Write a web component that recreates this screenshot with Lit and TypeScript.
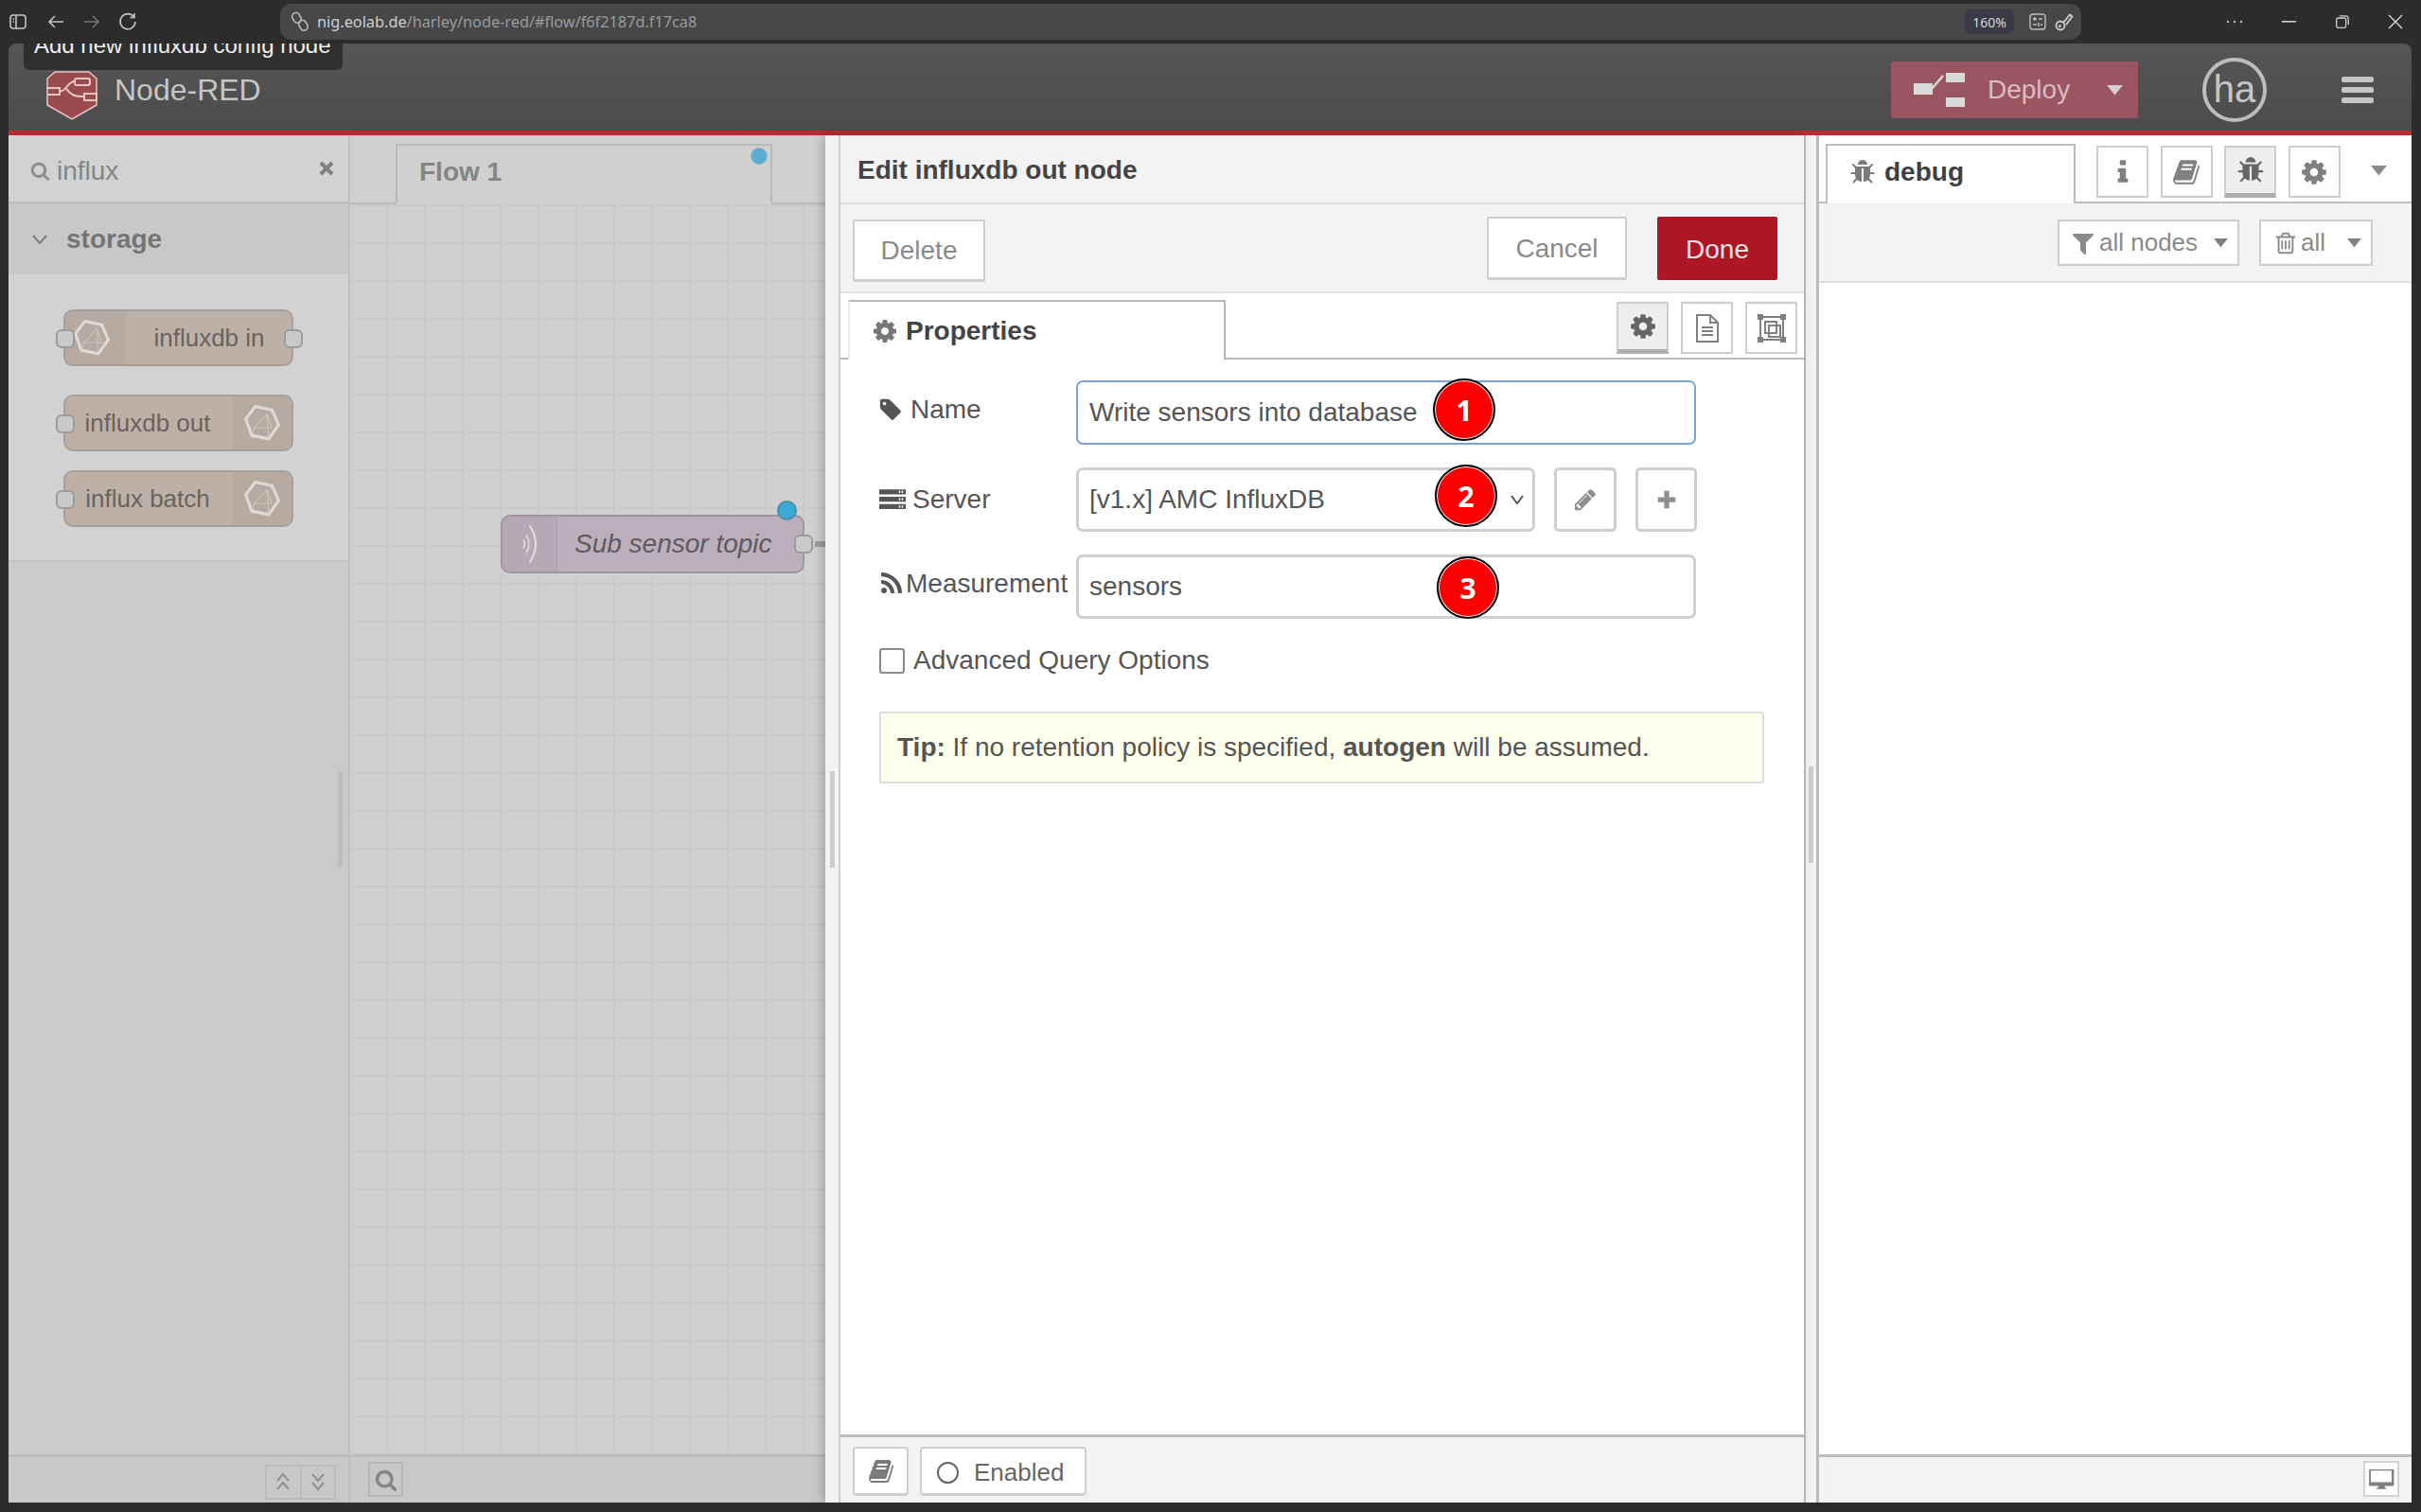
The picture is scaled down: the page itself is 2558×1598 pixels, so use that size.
import { LitElement, html, css } from 'lit';
import { customElement } from 'lit/decorators.js';

// font-awesome 4 style glyphs, all in a 1792 box
const GEAR = 'M1152 896q0-106-75-181t-181-75-181 75-75 181 75 181 181 75 181-75 75-181zm512-109v222q0 12-8 23t-20 13l-185 28q-19 54-39 91 35 50 107 138 10 12 10 25t-9 23q-27 37-99 108t-94 71q-12 0-26-9l-138-108q-44 23-91 38-16 136-29 186-7 28-36 28h-222q-14 0-24.5-8.5t-11.5-21.5l-28-184q-49-16-90-37l-141 107q-10 9-25 9-14 0-25-11-126-114-165-168-7-10-7-23 0-12 8-23 15-21 51-66.5t54-70.5q-27-50-41-99l-183-27q-13-2-21-12.5t-8-23.5v-222q0-12 8-23t19-13l186-28q14-46 39-92-40-57-107-138-10-12-10-24 0-10 9-23 26-36 98.5-107.5t94.5-71.5q13 0 26 10l138 107q44-23 91-38 16-136 29-186 7-28 36-28h222q14 0 24.5 8.5t11.5 21.5l28 184q49 16 90 37l142-107q9-9 24-9 13 0 25 10 129 119 165 170 7 8 7 22 0 12-8 23-15 21-51 66.5t-54 70.5q26 50 41 98l183 28q13 2 21 12.5t8 23.5z';
const BUG = 'M1696 960q0 26-19 45t-45 19h-224q0 171-67 290l208 209q19 19 19 45t-19 45q-18 19-45 19t-45-19l-198-197q-5 5-15 13t-42 28.5-65 36.5-82 29-97 13v-896h-128v896q-51 0-101.5-13.5t-87-33-66-39-43.5-32.5l-15-14-183 207q-20 21-48 21-24 0-43-16-19-18-20.5-44.5t15.5-46.5l202-227q-58-114-58-274h-224q-26 0-45-19t-19-45 19-45 45-19h224v-294l-173-173q-19-19-19-45t19-45 45-19 45 19l173 173h844l173-173q19-19 45-19t45 19 19 45-19 45l-173 173v294h224q26 0 45 19t19 45zm-480-576h-640q0-133 93.5-226.5t226.5-93.5 226.5 93.5 93.5 226.5z';
const TAG = 'M576 448q0-53-37.5-90.5t-90.5-37.5-90.5 37.5-37.5 90.5 37.5 90.5 90.5 37.5 90.5-37.5 37.5-90.5zm1067 576q0 53-37 90l-491 492q-39 37-91 37-53 0-90-37l-715-716q-38-37-64.5-101t-26.5-117v-416q0-52 38-90t90-38h416q53 0 117 26.5t102 64.5l715 714q37 39 37 91z';
const RSS = 'M576 1344q0 80-56 136t-136 56-136-56-56-136 56-136 136-56 136 56 56 136zm512 123q2 28-17 48-18 21-47 21h-135q-25 0-43-16.5t-20-41.5q-22-229-184.5-391.5t-391.5-184.5q-25-2-41.5-20t-16.5-43v-135q0-29 21-47 17-17 43-17h5q160 13 306 80.5t259 181.5q114 113 181.5 259t80.5 306zm512 2q2 27-18 47-18 20-46 20h-143q-26 0-44.5-17.5t-19.5-42.5q-12-215-101-408.5t-231.5-336-336-231.5-408.5-102q-25-1-42.5-19.5t-17.5-43.5v-143q0-28 20-46 18-18 44-18h3q262 13 501.5 120t425.5 294q187 186 294 425.5t120 501.5z';
const BOOK = 'M1703 478q40 57 18 129l-275 906q-19 64-76.5 107.5t-122.5 43.5h-923q-77 0-148.5-53.5t-99.5-131.5q-24-67-2-127 0-4 3-27t4-37q1-8-3-21.5t-3-19.5q2-11 8-21t16.5-23.5 16.5-23.5q23-38 45-91.5t30-91.5q3-10 .5-30t-.5-28q3-11 17-28t17-23q21-36 42-92t25-90q1-9-2.5-32t.5-28q4-13 22-30.5t22-22.5q19-26 42.5-84.5t27.5-96.5q1-8-3-25.5t-2-26.5q2-8 9-18t18-23 17-21q8-12 16.5-30.5t15-35 16-36 19.5-32 26.5-23.5 36-11.5 47.5 5.5l-1 3q38-9 51-9h761q74 0 114 56t18 130l-274 906q-36 119-71.5 153.5t-128.5 34.5h-869q-27 0-38 15-11 16-1 43 24 70 144 70h923q29 0 56-15.5t35-41.5l300-987q7-22 5-57 38 15 59 43zm-1064 2q-4 13 2 22.5t20 9.5h608q13 0 25.5-9.5t16.5-22.5l21-64q4-13-2-22.5t-20-9.5h-608q-13 0-25.5 9.5t-16.5 22.5zm-83 256q-4 13 2 22.5t20 9.5h608q13 0 25.5-9.5t16.5-22.5l21-64q4-13-2-22.5t-20-9.5h-608q-13 0-25.5 9.5t-16.5 22.5z';
const SEARCH = 'M1216 832q0-185-131.5-316.5t-316.5-131.5-316.5 131.5-131.5 316.5 131.5 316.5 316.5 131.5 316.5-131.5 131.5-316.5zm512 832q0 52-38 90t-90 38q-54 0-90-38l-343-342q-179 124-399 124-143 0-273.5-55.5t-225-150-150-225-55.5-273.5 55.5-273.5 150-225 225-150 273.5-55.5 273.5 55.5 225 150 150 225 55.5 273.5q0 220-124 399l343 343q37 37 37 90z';
const PENCIL = 'M491 1536l91-91-235-235-91 91v107h128v128h107zm523-928q0-22-22-22-10 0-17 7l-542 542q-7 7-7 17 0 22 22 22 10 0 17-7l542-542q7-7 7-17zm-54-192l416 416-832 832h-416v-416zm683 96q0 53-37 90l-166 166-416-416 166-165q36-38 90-38 53 0 91 38l235 234q37 39 37 91z';
const FILTER = 'M1595 295q17 41-14 70l-493 493v742q0 42-39 59-13 5-25 5-27 0-45-19l-256-256q-19-19-19-45v-486l-493-493q-31-29-14-70 17-39 59-39h1280q42 0 59 39z';
const TRASH = 'M704 736v576q0 14-9 23t-23 9h-64q-14 0-23-9t-9-23v-576q0-14 9-23t23-9h64q14 0 23 9t9 23zm256 0v576q0 14-9 23t-23 9h-64q-14 0-23-9t-9-23v-576q0-14 9-23t23-9h64q14 0 23 9t9 23zm256 0v576q0 14-9 23t-23 9h-64q-14 0-23-9t-9-23v-576q0-14 9-23t23-9h64q14 0 23 9t9 23zm128 724v-948h-896v948q0 22 7 40.5t14.5 27 10.5 8.5h832q3 0 10.5-8.5t14.5-27 7-40.5zm-672-1076h448l-48-117q-7-9-17-11h-317q-10 2-17 11zm928 32v64q0 14-9 23t-23 9h-96v948q0 83-47 143.5t-113 60.5h-832q-66 0-113-58.5t-47-141.5v-952h-96q-14 0-23-9t-9-23v-64q0-14 9-23t23-9h309l70-167q15-37 54-63t79-26h320q40 0 79 26t54 63l70 167h309q14 0 23 9t9 23z';
const INFO = 'M1216 1344v128q0 26-19 45t-45 19h-512q-26 0-45-19t-19-45v-128q0-26 19-45t45-19h64v-384h-64q-26 0-45-19t-19-45v-128q0-26 19-45t45-19h384q26 0 45 19t19 45v576h64q26 0 45 19t19 45zm-128-1152v192q0 26-19 45t-45 19h-256q-26 0-45-19t-19-45v-192q0-26 19-45t45-19h256q26 0 45 19t19 45z';
const SERVER = 'M0 200h1792v340h-1792zM1330 290v160h90v-160zM1520 290v160h90v-160zM0 700h1792v340h-1792zM1330 790v160h90v-160zM1520 790v160h90v-160zM0 1200h1792v340h-1792zM1330 1290v160h90v-160zM1520 1290v160h90v-160z';
const PLUS = 'M700 200h392v500h500v392h-500v500h-392v-500h-500v-392h500z';
const DESKTOP = 'M100 250h1592q60 0 60 60v1000q0 60-60 60h-560v130h120v90h-680v-90h120v-130h-560q-60 0-60-60v-1000q0-60 60-60zM190 340v780h1412v-780z';

const fa = (d: string, size: number, color = 'currentColor') =>
  html`<svg width=${size} height=${size} viewBox="0 0 1792 1792" fill=${color} fill-rule="evenodd"><path d=${d}></path></svg>`;

const influxIcon = html`<svg width="40" height="40" viewBox="0 0 38 38" fill="none" stroke="#e0dad4" stroke-linejoin="round">
  <path stroke-width="3" d="M12 2.500 29 6 35.500 21 25.500 35 8.500 31.500 2.500 15Z"></path>
  <path stroke-width="1" opacity=".55" d="M24 10 11 24 29 24ZM24 10 25.500 35M11 24 8.500 31.500"></path>
</svg>`;

const caret = (w: number, color: string) =>
  html`<svg width=${w} height=${w * 0.62} viewBox="0 0 16 10"><path d="M0 0H16L8 10Z" fill=${color}></path></svg>`;

@customElement('app-root')
export class AppRoot extends LitElement {
  static styles = css`
    :host {
      display: block;
      width: 2558px;
      height: 1598px;
      background: #2c2c2c;
      font-family: "Liberation Sans", Arial, sans-serif;
      font-size: 28px;
      overflow: hidden;
    }
    * { box-sizing: border-box; }
    svg { display: block; flex: none; }

    /* browser bar */
    .chrome { height: 46px; display: flex; align-items: center; color: #bdbdbd; }
    .nav { display: flex; align-items: center; width: 296px; padding-left: 10px; gap: 20px; }
    .nav .back { margin-left: 2px; }
    .nav .reload { margin-left: -1px; }
    .url { width: 1903px; height: 38px; background: #474747; border-radius: 12px; display: flex; align-items: center; padding-left: 12px; }
    .url-text { margin-left: 9px; font: 16.3px "Noto Sans", sans-serif; color: #9b9b9b; flex: 1; white-space: nowrap; }
    .url-text b { font-weight: 400; color: #cfcfcf; }
    .zoom-pill { width: 52px; height: 26px; border-radius: 7px; background: #3a3a46; font: 14px "Noto Sans", sans-serif; color: #d5d5d5; display: flex; align-items: center; justify-content: center; }
    .url-icons { display: flex; align-items: center; gap: 9px; margin: 0 8px 0 16px; }
    .win { flex: 1; display: flex; align-items: center; justify-content: space-between; padding: 0 19px 0 153px; }

    /* node-red window */
    .window { position: relative; height: 1542px; margin: 0 10px 0 9px; border-radius: 8px 8px 0 0; overflow: hidden; display: flex; flex-direction: column; }
    .tooltip { position: absolute; left: 16px; top: -18px; width: 337px; height: 46px; border-radius: 6px; background: #2f2f2f; color: #eee; font-size: 24px; line-height: 40px; padding-left: 11px; white-space: nowrap; z-index: 5; }

    .header { flex: none; height: 97px; background: linear-gradient(#555, #4c4c4c); border-bottom: 5px solid #bc2a2e; display: flex; align-items: center; padding: 6px 40px 0; }
    .logo { display: flex; align-items: center; gap: 18px; font-size: 32px; color: #c6c6c6; }
    .logo svg { margin-top: 12px; }
    .deploy { margin-left: auto; width: 261px; height: 60px; background: #9a5660; border-radius: 2px; display: flex; align-items: center; color: #d9bcc0; padding-left: 24px; }
    .deploy span { margin-left: 24px; flex: 1; }
    .deploy svg:last-child { margin-right: 16px; }
    .avatar { width: 68px; height: 68px; margin-left: 68px; border: 4px solid #bdbdbd; border-radius: 50%; color: #c6c6c6; font-size: 40px; display: flex; align-items: center; justify-content: center; padding-bottom: 2px; }
    .burger { width: 34px; margin-left: 79px; display: flex; flex-direction: column; gap: 5px; }
    .burger i { display: block; height: 6px; border-radius: 2px; background: #c6c6c6; }

    .main { flex: 1; min-height: 0; display: flex; }

    /* palette */
    .palette { position: relative; width: 359px; flex: none; display: flex; flex-direction: column; background: #cacaca; }
    .pal-search { height: 72px; flex: none; background: #d2d2d2; border-bottom: 2px solid #bcbcbc; display: flex; align-items: center; padding: 6px 0 0 23px; color: #858585; }
    .pal-search span { margin-left: 7px; flex: 1; }
    .pal-search svg:first-child { margin-bottom: 2px; }
    .pal-search svg:last-child { margin: 0 15px 6px 0; }
    .pal-cat { height: 75px; flex: none; background: #c8c8c8; display: flex; align-items: center; padding-left: 25px; font-weight: 700; color: #757575; }
    .pal-cat span { margin-left: 20px; }
    .pal-body { flex: none; background: #d2d2d2; border-bottom: 2px solid #c2c2c2; padding: 37px 0 35px 58px; }
    .pnode { position: relative; width: 243px; height: 60px; border: 2px solid #a5a09c; border-radius: 10px; background: #bdb1a7; color: #6b625e; font-size: 26px; display: flex; }
    .pnode + .pnode { margin-top: 20px; }
    .pnode.first + .pnode { margin-top: 30px; }
    .pnode .ic { width: 63px; flex: none; background: #b7aba1; display: flex; align-items: center; justify-content: center; border-radius: 8px 0 0 8px; }
    .pnode.first .ic { padding-right: 7px; }
    .pnode.right .ic { border-radius: 0 8px 8px 0; }
    .pnode .lbl { flex: 1; display: flex; align-items: center; justify-content: center; white-space: nowrap; padding-left: 2px; }
    .pnode.right .lbl { padding: 0 2px 0 0; }
    .port { position: absolute; top: 19px; width: 20px; height: 20px; background: #c9c9c9; border: 2px solid #9b9b9b; border-radius: 6px; }
    .port.in { left: -10px; }
    .port.out { right: -12px; }
    .pal-rest { flex: 1; }
    .foot { height: 51px; flex: none; background: #c8c8c8; border-top: 3px solid #bcbcbc; display: flex; align-items: center; }
    .pal-foot { justify-content: flex-end; padding: 4px 13px 0 0; }
    .updown { display: flex; width: 75px; height: 37px; border: 2px solid #bcbcbc; }
    .updown div { flex: 1; display: flex; align-items: center; justify-content: center; color: #8f8f8f; }
    .updown div + div { border-left: 2px solid #bcbcbc; }
    .handle { position: absolute; top: 672px; right: 6px; width: 5px; height: 102px; background: #bdbdbd; }

    /* workspace */
    .workspace { width: 504px; flex: none; display: flex; flex-direction: column; border-left: 2px solid #bfbfbf; background: #d0d0d0; }
    .ws-tabs { height: 73px; flex: none; border-bottom: 2px solid #b9b9b9; padding: 9px 0 0 48px; }
    .flowtab { position: relative; width: 398px; height: 64px; margin-bottom: -2px; border: 2px solid #b9b9b9; border-bottom: 2px solid #d0d0d0; padding: 12px 0 0 23px; font-weight: 700; color: #858585; background: #d0d0d0; }
    .dot { position: absolute; width: 18px; height: 18px; border-radius: 50%; background: #5cabd2; border: 1px solid #8fb4c8; }
    .flowtab .dot { top: 2px; right: 3px; }
    .canvas { position: relative; flex: 1; background-color: #d0d0d0; background-image: linear-gradient(#cacaca 2px, transparent 2px), linear-gradient(90deg, #cacaca 2px, transparent 2px); background-size: 40px 40px; background-position: 0 0, -2px 0; }
    .cnode { position: absolute; left: 159px; top: 328px; width: 321px; height: 62px; border: 2px solid #9d96a0; border-radius: 10px; background: #bcafbc; color: #5f5a60; font-style: italic; display: flex; }
    .cnode .ic { width: 58px; flex: none; background: #b6a9b6; border-right: 1px solid #aca0ac; border-radius: 8px 0 0 8px; display: flex; align-items: center; justify-content: center; }
    .cnode .lbl { flex: 1; display: flex; align-items: center; padding-left: 18px; white-space: nowrap; }
    .cnode .dot { top: -17px; right: 6px; width: 21px; height: 21px; background: #3daad4; border: 2px solid #4b8fae; }
    .cnode .port { top: 19px; right: -11px; }
    .wire { position: absolute; left: 491px; top: 356px; width: 13px; height: 6px; background: #9c9c9c; }
    .ws-foot { padding: 0 0 1px 19px; }
    .zoombtn { width: 37px; height: 37px; border: 2px solid #b6b6b6; display: flex; align-items: center; justify-content: center; color: #858585; }

    /* edit tray */
    .tray { position: relative; width: 1034px; flex: none; display: flex; box-shadow: -3px 0 10px rgba(0, 0, 0, .22); z-index: 1; }
    .tray-grip { position: relative; width: 16px; flex: none; background: #f3f3f3; border-right: 2px solid #cfcfcf; }
    .grip-bar { position: absolute; top: 672px; left: 5px; width: 5px; height: 102px; background: #cdcdcd; }
    .tray-body { flex: 1; min-width: 0; display: flex; flex-direction: column; background: #fff; color: #555; }
    .tray-title { height: 73px; flex: none; background: #f3f3f3; border-bottom: 2px solid #dcdcdc; display: flex; align-items: center; padding: 2px 0 0 18px; font-size: 28px; font-weight: 700; color: #444; }
    .tray-actions { height: 94px; flex: none; background: #f3f3f3; border-bottom: 2px solid #e2e2e2; display: flex; padding: 13px 28px 0 13px; }
    .btn { border: 2px solid #cfcfcf; border-bottom-width: 3px; border-radius: 2px; background: #fff; color: #8a8a8a; display: flex; align-items: center; justify-content: center; }
    .btn.del { width: 140px; height: 66px; margin: 3px auto 0 0; }
    .btn.cancel { width: 148px; height: 67px; padding-top: 2px; }
    .btn.done { width: 127px; height: 67px; margin-left: 32px; padding-top: 2px; background: #ad1625; border: none; color: #f3e3e4; }
    .tray-tabs { position: relative; height: 70px; flex: none; border-bottom: 2px solid #b9b9b9; padding: 7px 0 0 8px; display: flex; }
    .proptab { width: 399px; height: 63px; border: 2px solid #b9b9b9; border-bottom: none; background: #fff; padding-left: 23px; display: flex; align-items: center; gap: 8px; font-weight: 700; color: #444; margin-right: auto; border-left-color: #e8e8e8; }
    .proptab svg { color: #777; }
    .tabbtns { display: flex; gap: 13px; padding: 2px 7px 0 0; height: 57px; }
    .sq { width: 55px; height: 55px; border: 2px solid #cdcdcd; background: #fff; display: flex; align-items: center; justify-content: center; color: #808080; }
    .sq.on { background: #eeeeee; border-bottom: 5px solid #aeaeae; color: #666; }
    .form { flex: 1; padding: 22px 0 0 41px; position: relative; }
    .row { position: relative; display: flex; align-items: center; height: 67px; margin-bottom: 25px; }
    .row label { width: 209px; flex: none; display: flex; align-items: center; gap: 8px; padding-bottom: 5px; white-space: nowrap; }
    .row label svg { margin-left: -1px; }
    .row label.srv { gap: 7px; padding-bottom: 0; }
    .row label.srv svg { margin-left: 0; }
    .row label.msr { gap: 1px; }
    .input { width: 655px; height: 68px; margin-left: -1px; border: 3px solid #cfcfcf; border-radius: 7px; padding-left: 11px; display: flex; align-items: center; background: #fff; color: #555; }
    .input.focus { border-color: #7aa3d8; border-width: 2px; padding-left: 12px; }
    .input.sel { width: 485px; justify-content: space-between; padding-right: 9px; }
    .rbtn { width: 66px; height: 68px; margin-left: 20px; border: 3px solid #cfcfcf; border-radius: 5px; display: flex; align-items: center; justify-content: center; color: #8f8f8f; }
    .rbtn + .rbtn { width: 65px; }
    .badge { position: absolute; width: 66px; height: 66px; border-radius: 50%; background: #fa0000; border: 2px solid #000; box-shadow: inset 0 0 0 1px #fff; color: #fff; font: 700 30px "Open Sans", sans-serif; display: flex; align-items: center; justify-content: center; }
    .b1 { left: 585px; top: -2px; }
    .b2 { left: 587px; top: -3px; }
    .b3 { left: 589px; top: 2px; }
    .check { display: flex; align-items: center; gap: 9px; margin-top: 29px; }
    .check i { display: block; width: 27px; height: 27px; border: 2px solid #8a8a8a; border-radius: 3px; }
    .tip { width: 935px; height: 76px; margin-top: 38px; background: #ffffee; border: 2px solid #dedede; border-radius: 3px; display: flex; align-items: center; padding-left: 17px; white-space: pre; }
    .tray-foot { height: 72px; flex: none; background: #f3f3f3; border-top: 3px solid #bcbcbc; display: flex; gap: 12px; padding: 10px 0 0 13px; }
    .fbtn { height: 52px; border: 2px solid #cfcfcf; border-bottom-width: 3px; border-radius: 4px; background: #fff; color: #7b7b7b; display: flex; align-items: center; justify-content: center; }
    .fbtn.b { width: 59px; }
    .fbtn.en { width: 176px; gap: 16px; color: #666; font-size: 26px; justify-content: flex-start; padding: 4px 0 0 16px; }
    .fbtn.en i { display: block; width: 23px; height: 23px; border: 2px solid #666; border-radius: 50%; }

    /* right sidebar */
    .gutter { position: relative; width: 16px; flex: none; background: #f3f3f3; border-left: 2px solid #c0c0c0; border-right: 3px solid #bcbcbc; }
    .gutter .grip-bar { left: 3px; top: 667px; }
    .side { flex: 1; min-width: 0; display: flex; flex-direction: column; background: #fff; color: #8a8a8a; }
    .side-tabs { height: 72px; flex: none; border-bottom: 2px solid #bcbcbc; display: flex; padding: 9px 0 0 7px; }
    .dbgtab { width: 264px; height: 63px; border: 2px solid #bcbcbc; border-bottom: none; background: #fff; padding: 0 0 5px 23px; display: flex; align-items: center; gap: 9px; font-weight: 700; color: #3f3f3f; margin-bottom: -2px; }
    .dbgtab svg { color: #7b7b7b; }
    .side-btns { display: flex; gap: 12.5px; margin-left: 22px; padding-top: 2px; height: 57px; }
    .side-caret { margin: 23px 0 0 32px; }
    .side-bar { height: 84px; flex: none; background: #f3f3f3; border-bottom: 2px solid #dedede; display: flex; justify-content: flex-end; gap: 21px; padding: 17px 41px 0 0; }
    .drop { height: 49px; border: 2px solid #cdcdcd; background: #fff; display: flex; align-items: center; padding: 0 10px 0 13px; color: #8a8a8a; font-size: 26px; }
    .drop span { flex: 1; }
    .drop.a { width: 192px; }
    .drop.a svg:first-child { margin: 0 3px 0 -2px; }
    .drop.t { width: 120px; }
    .drop.t svg:first-child { margin-right: 3px; }
    .side-body { flex: 1; }
    .side-foot { height: 51px; flex: none; background: #f3f3f3; border-top: 3px solid #bcbcbc; display: flex; justify-content: flex-end; padding: 4px 13px 0 0; align-items: flex-start; }
    .deskbtn { width: 38px; height: 38px; border: 2px solid #d4d4d4; background: #fff; display: flex; align-items: center; justify-content: center; color: #808080; }
  `;

  renderChrome() {
    return html`
      <div class="chrome">
        <div class="nav">
          <svg width="18" height="16" viewBox="0 0 18 16" fill="none" stroke="#c4c4c4" stroke-width="1.6"><rect x="1" y="1" width="16" height="14" rx="3"></rect><path d="M7 1V15M3.500 5H5M3.500 8H5"></path></svg>
          <svg class="back" width="18" height="16" viewBox="0 0 18 16" fill="none" stroke="#c4c4c4" stroke-width="1.6"><path d="M17 8H2M8 2 2 8 8 14"></path></svg>
          <svg width="18" height="16" viewBox="0 0 18 16" fill="none" stroke="#757575" stroke-width="1.6"><path d="M1 8H16M10 2 16 8 10 14"></path></svg>
          <svg class="reload" width="20" height="20" viewBox="0 0 20 20" fill="none" stroke="#c4c4c4" stroke-width="1.6"><path d="M16.500 5A8 8 0 1 0 18 10"></path><path d="M17 1V5.500H12.500"></path></svg>
        </div>
        <div class="url">
          <svg width="18" height="22" viewBox="0 0 18 22" fill="none" stroke="#bdbdbd" stroke-width="1.6"><rect x="1.500" y="1.500" width="8" height="11" rx="4" transform="rotate(-28 5 7)"></rect><rect x="8.500" y="9.500" width="8" height="11" rx="4" transform="rotate(-28 12 15)"></rect></svg>
          <div class="url-text"><b>nig.eolab.de</b>/harley/node-red/#flow/f6f2187d.f17ca8</div>
          <div class="zoom-pill">160%</div>
          <div class="url-icons">
            <svg width="18" height="18" viewBox="0 0 18 18" fill="none" stroke="#bdbdbd" stroke-width="1.400"><rect x="1" y="1" width="16" height="16" rx="3"></rect><path d="M4 6H8M6 4V8M10 6H14M4 12H8M10 10V14M12 12H14"></path></svg>
            <svg width="20" height="20" viewBox="0 0 20 20" fill="none" stroke="#d0d0d0" stroke-width="1.800"><circle cx="6" cy="14" r="4.500"></circle><path d="M9 11 16 2.500 18.500 4.500 12 13"></path><circle cx="5.500" cy="14.500" r=".6"></circle></svg>
          </div>
        </div>
        <div class="win">
          <svg width="18" height="4" viewBox="0 0 18 4" fill="#b5b5b5"><circle cx="2" cy="2" r="1.300"></circle><circle cx="9" cy="2" r="1.300"></circle><circle cx="16" cy="2" r="1.300"></circle></svg>
          <svg width="15" height="2" viewBox="0 0 15 2"><rect width="15" height="1.600" fill="#cfcfcf"></rect></svg>
          <svg width="14" height="14" viewBox="0 0 14 14" fill="none" stroke="#cfcfcf" stroke-width="1.300"><rect x=".7" y="3" width="10" height="10.300" rx="2"></rect><path d="M4 .8H10.500A2.700 2.700 0 0 1 13.200 3.500V10"></path></svg>
          <svg width="16" height="16" viewBox="0 0 16 16" stroke="#dadada" stroke-width="1.400"><path d="M1 1 15 15M15 1 1 15"></path></svg>
        </div>
      </div>
    `;
  }

  renderHeader() {
    return html`
      <div class="header">
        <div class="logo">
          <svg width="54" height="52" viewBox="0 0 54 52" fill="none" stroke="#e8c6c6" stroke-width="1.500">
            <path fill="#9a4b4e" d="M9 1H45L53 8V36L27 51 1 36V8Z"></path>
            <path stroke-width="2" d="M1 18H14V25H1M14 21.500C22 21.500 22 11 30 11M30 8H44A2 2 0 0 1 46 10V13A2 2 0 0 1 44 15H32A2 2 0 0 1 30 13V10A2 2 0 0 1 32 8ZM20 17C26 27 32 27 40 27M40 24H53V31H40Z"></path>
          </svg>
          <span>Node-RED</span>
        </div>
        <div class="deploy">
          <svg width="54" height="36" viewBox="0 0 54 36" fill="#d9d9d9"><rect x="0" y="11" width="20" height="12"></rect><rect x="34" y="0" width="20" height="10"></rect><rect x="34" y="26" width="20" height="10"></rect><path d="M19 17 31 3" stroke="#d9d9d9" stroke-width="2.500" fill="none"></path></svg>
          <span>Deploy</span>
          ${caret(17, '#d8d0d2')}
        </div>
        <div class="avatar">ha</div>
        <div class="burger"><i></i><i></i><i></i></div>
      </div>
    `;
  }

  renderPalette() {
    return html`
      <div class="palette">
        <div class="pal-search">
          ${fa(SEARCH, 21, '#8f8f8f')}
          <span>influx</span>
          <svg width="16" height="16" viewBox="0 0 16 16"><path d="M2 2 14 14M14 2 2 14" stroke="#808080" stroke-width="4"></path></svg>
        </div>
        <div class="pal-cat">
          <svg width="16" height="10" viewBox="0 0 16 10" fill="none" stroke="#7d7d7d" stroke-width="2"><path d="M1 1 8 9 15 1"></path></svg>
          <span>storage</span>
        </div>
        <div class="pal-body">
          <div class="pnode first">
            <span class="port in"></span>
            <div class="ic">${influxIcon}</div>
            <div class="lbl">influxdb in</div>
            <span class="port out"></span>
          </div>
          <div class="pnode right">
            <span class="port in"></span>
            <div class="lbl">influxdb out</div>
            <div class="ic">${influxIcon}</div>
          </div>
          <div class="pnode right">
            <span class="port in"></span>
            <div class="lbl">influx batch</div>
            <div class="ic">${influxIcon}</div>
          </div>
        </div>
        <div class="pal-rest"></div>
        <div class="foot pal-foot">
          <div class="updown">
            <div><svg width="14" height="20" viewBox="0 0 14 20" fill="none" stroke="#8f8f8f" stroke-width="2"><path d="M1 9 7 2 13 9M1 18 7 11 13 18"></path></svg></div>
            <div><svg width="14" height="20" viewBox="0 0 14 20" fill="none" stroke="#8f8f8f" stroke-width="2"><path d="M1 2 7 9 13 2M1 11 7 18 13 11"></path></svg></div>
          </div>
        </div>
        <div class="handle"></div>
      </div>
    `;
  }

  renderWorkspace() {
    return html`
      <div class="workspace">
        <div class="ws-tabs">
          <div class="flowtab">Flow 1<span class="dot"></span></div>
        </div>
        <div class="canvas">
          <div class="cnode">
            <div class="ic">
              <svg width="20" height="42" viewBox="0 0 20 42" fill="none" stroke="#e4dee4" stroke-linecap="round"><path stroke-width="2" d="M10 2Q22 21 10 40"></path><path stroke-width="1.500" d="M6 12Q12 21 6 30"></path><path stroke-width="1.500" d="M3 17Q6 21 3 25"></path></svg>
            </div>
            <div class="lbl">Sub sensor topic</div>
            <span class="port"></span>
            <span class="dot"></span>
          </div>
          <div class="wire"></div>
        </div>
        <div class="foot ws-foot">
          <div class="zoombtn">${fa(SEARCH, 24)}</div>
        </div>
      </div>
    `;
  }

  renderTray() {
    return html`
      <div class="tray">
        <div class="tray-grip"><div class="grip-bar"></div></div>
        <div class="tray-body">
          <div class="tray-title">Edit influxdb out node</div>
          <div class="tray-actions">
            <div class="btn del">Delete</div>
            <div class="btn cancel">Cancel</div>
            <div class="btn done">Done</div>
          </div>
          <div class="tray-tabs">
            <div class="proptab">${fa(GEAR, 28)}Properties</div>
            <div class="tabbtns">
              <div class="sq on">${fa(GEAR, 30)}</div>
              <div class="sq">
                <svg width="24" height="30" viewBox="0 0 24 30" fill="none" stroke="#808080" stroke-width="2"><path d="M1 1H15L23 9V29H1ZM15 1V9H23M6 14H18M6 18H18M6 22H18"></path></svg>
              </div>
              <div class="sq">
                <svg width="32" height="30" viewBox="0 0 32 30" fill="none" stroke="#808080" stroke-width="2"><path d="M4 3H28V27H4ZM9 8H21V20H9ZM13 12H25V24H13Z"></path><path fill="#808080" stroke="none" d="M1 0H7V6H1ZM25 0H31V6H25ZM1 24H7V30H1ZM25 24H31V30H25Z"></path></svg>
              </div>
            </div>
          </div>
          <div class="form">
            <div class="row">
              <label>${fa(TAG, 26)}Name</label>
              <div class="input focus">Write sensors into database</div>
              <div class="badge b1">1</div>
            </div>
            <div class="row">
              <label class="srv">${fa(SERVER, 28)}Server</label>
              <div class="input sel">
                <span>[v1.x] AMC InfluxDB</span>
                <svg width="14" height="10" viewBox="0 0 14 10" fill="none" stroke="#555" stroke-width="2"><path d="M1 1 7 9 13 1"></path></svg>
              </div>
              <div class="rbtn">${fa(PENCIL, 26)}</div>
              <div class="rbtn">${fa(PLUS, 24)}</div>
              <div class="badge b2">2</div>
            </div>
            <div class="row">
              <label class="msr">${fa(RSS, 28)}Measurement</label>
              <div class="input">sensors</div>
              <div class="badge b3">3</div>
            </div>
            <div class="check"><i></i><span>Advanced Query Options</span></div>
            <div class="tip"><b>Tip:</b> If no retention policy is specified, <b>autogen</b> will be assumed.</div>
          </div>
          <div class="tray-foot">
            <div class="fbtn b">${fa(BOOK, 28)}</div>
            <div class="fbtn en"><i></i><span>Enabled</span></div>
          </div>
        </div>
      </div>
    `;
  }

  renderSidebar() {
    return html`
      <div class="gutter"><div class="grip-bar"></div></div>
      <div class="side">
        <div class="side-tabs">
          <div class="dbgtab">${fa(BUG, 28)}debug</div>
          <div class="side-btns">
            <div class="sq">${fa(INFO, 30)}</div>
            <div class="sq">${fa(BOOK, 30)}</div>
            <div class="sq on">${fa(BUG, 30)}</div>
            <div class="sq">${fa(GEAR, 30)}</div>
          </div>
          <div class="side-caret">${caret(17, '#8a8a8a')}</div>
        </div>
        <div class="side-bar">
          <div class="drop a">${fa(FILTER, 28)}<span>all nodes</span>${caret(15, '#808080')}</div>
          <div class="drop t">${fa(TRASH, 26)}<span>all</span>${caret(15, '#808080')}</div>
        </div>
        <div class="side-body"></div>
        <div class="side-foot">
          <div class="deskbtn">${fa(DESKTOP, 28)}</div>
        </div>
      </div>
    `;
  }

  render() {
    return html`
      ${this.renderChrome()}
      <div class="window">
        ${this.renderHeader()}
        <div class="main">
          ${this.renderPalette()}
          ${this.renderWorkspace()}
          ${this.renderTray()}
          ${this.renderSidebar()}
        </div>
        <div class="tooltip">Add new influxdb config node</div>
      </div>
    `;
  }
}
